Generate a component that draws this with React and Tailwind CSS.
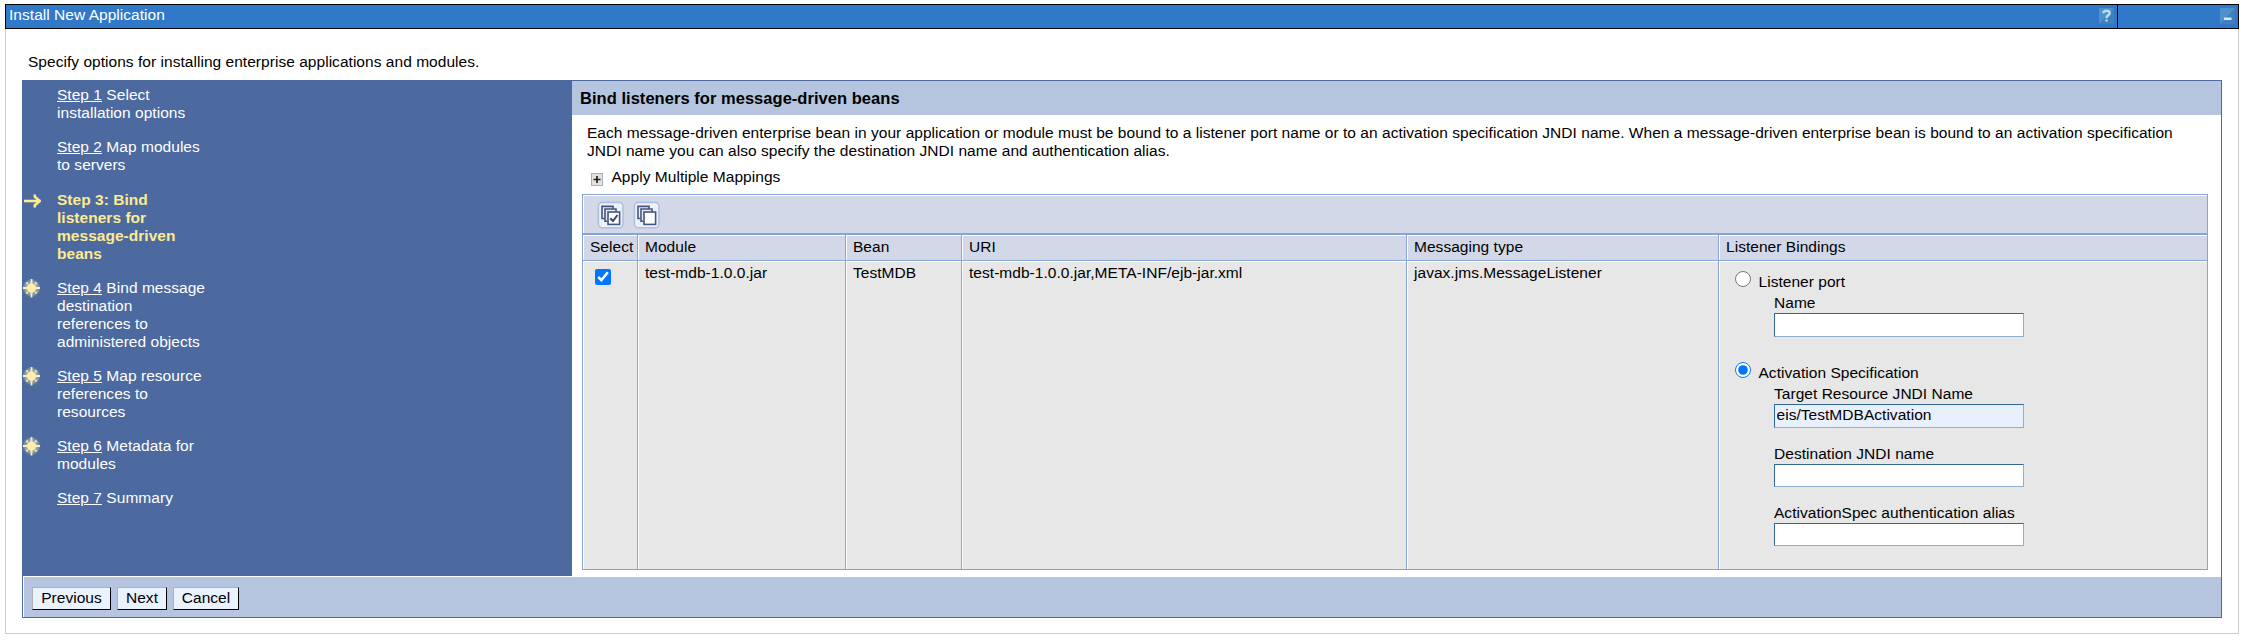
import React from "react";

const steps = [
  { link: "Step 1", lines: [" Select", "installation options"], h: "h-[52px]" },
  { link: "Step 2", lines: [" Map modules", "to servers"], h: "h-[53px]" },
  { current: true, lines: ["Step 3: Bind", "listeners for", "message-driven", "beans"], icon: "arrow", h: "h-[88px]" },
  { link: "Step 4", lines: [" Bind message", "destination", "references to", "administered objects"], icon: "star", h: "h-[88px]" },
  { link: "Step 5", lines: [" Map resource", "references to", "resources"], icon: "star", h: "h-[70px]" },
  { link: "Step 6", lines: [" Metadata for", "modules"], icon: "star", h: "h-[52px]" },
  { link: "Step 7", lines: [" Summary"], h: "h-[52px]" },
];

function Arrow() {
  return (
    <svg width="18" height="18" viewBox="0 0 18 18" className="mt-px" fill="none" stroke="#fdeb92" strokeWidth="2.6">
      <path d="M0 9H16.5" strokeWidth="2.6" />
      <path d="M10.8 2.6V4.8L15.8 9L10.8 13.2V15.4" strokeLinejoin="round" />
    </svg>
  );
}

function Star() {
  return (
    <svg width="18" height="20" viewBox="0 0 18 20" className="-ml-px">
      <defs>
        <radialGradient id="glow">
          <stop offset="0" stopColor="#f6ecb0" stopOpacity="0.75" />
          <stop offset="0.7" stopColor="#e0dcb4" stopOpacity="0.45" />
          <stop offset="1" stopColor="#c0c6b4" stopOpacity="0" />
        </radialGradient>
      </defs>
      <circle cx="8.5" cy="9" r="9.5" fill="url(#glow)" />
      <path d="M8.5 0V18.5M0 9H17" stroke="#fdeeae" strokeWidth="1.8" />
      <path d="M3.4 3.6L13.6 14.4M13.6 3.6L3.4 14.4" stroke="#fdeeae" strokeWidth="2" strokeDasharray="2 2 7 2" />
      <circle cx="8.5" cy="9" r="4.6" fill="#fdeeae" />
    </svg>
  );
}

function Step({ step }) {
  return (
    <li className={`flex ${step.h}`}>
      <span className="w-[34px] shrink-0 pl-px">
        {step.icon === "arrow" && <Arrow />}
        {step.icon === "star" && <Star />}
      </span>
      <span className={step.current ? "font-bold text-[#fdeb92]" : "text-white"}>
        {step.lines.map((line, i) => (
          <span key={line} className="block h-[18px] whitespace-pre">
            {i === 0 && step.link && <a className="underline">{step.link}</a>}
            {line}
          </span>
        ))}
      </span>
    </li>
  );
}

function StackIcon({ checked }) {
  return (
    <svg width="27" height="28" viewBox="0 0 27 28">
      <rect x="1.4" y="1.4" width="24.6" height="25.4" rx="4" fill="#edf0f6" stroke="#acc1df" strokeWidth="1.6" />
      <g fill="#e9edf5" stroke="#435580" strokeWidth="1.6">
        <path d="M7.4 17.5H5V5.4H16V8" />
        <path d="M10 20.3H8V8H19V10.4" />
        <rect x="11" y="11" width="11.6" height="12.4" fill="#fff" />
      </g>
      {checked && <path d="M13.3 17.2L16 20L20.5 14" fill="none" stroke="#33456f" strokeWidth="2" />}
    </svg>
  );
}

function Cell({ head, children }) {
  return (
    <div
      className={`border-r border-[#88a3d6] pt-[3px] pl-[7px] shadow-[inset_1px_1px_0_#fff] ${
        head ? "h-[25px] bg-[#d2d8e8]" : "h-[308px] bg-[#e7e7e7]"
      }`}
    >
      {children}
    </div>
  );
}

function Field({ label, value, className = "" }) {
  return (
    <label className="block pl-[48px]">
      <span className="block h-[18px]">{label}</span>
      <input
        defaultValue={value}
        className={`mt-px block w-[250px] border border-t-[#336699] border-r-[#90afd0] border-b-[#90afd0] border-l-[#336699] px-[1.5px] pb-[2px] outline-none ${className}`}
      />
    </label>
  );
}

function Radio({ label, checked }) {
  return (
    <label className="flex h-[21px]">
      <input type="radio" name="binding" defaultChecked={checked} className="-mt-[2px] mr-[7.5px] ml-[9px] size-4 shrink-0" />
      <span>{label}</span>
    </label>
  );
}

function Button({ children, className }) {
  return (
    <button
      className={`h-[23px] border border-t-[#b1b1b1] border-r-black border-b-black border-l-[#b1b1b1] bg-[#eaf1ff] leading-[18px] ${className}`}
    >
      <span className="block h-[21px] pt-px">{children}</span>
    </button>
  );
}

export default function App() {
  return (
    <div className="h-[642px] w-[2248px] overflow-hidden bg-white pt-1 pl-[5px] font-['Liberation_Sans',Arial,sans-serif] text-[15.5px] leading-[18px] tracking-[0.036px] text-black">
      <div className="h-[630px] w-[2234px] border-r border-b border-l border-[#ccc]">
        <header className="-mx-px flex h-[25px] border border-black bg-[#3079c9] text-white">
          <h1 className="grow pt-px pl-[3px]">Install New Application</h1>
          <div className="flex w-[19px] border-r border-black pt-[3px]">
            <svg width="15" height="16" viewBox="0 0 15 16">
              <rect width="15" height="16" fill="#4f90cf" />
              <path d="M0 16H15V0Z" fill="#3f80bd" />
              <path d="M4.3 5.2C4.3 1.9 10.7 1.9 10.7 5.2C10.7 7.4 7.5 7.3 7.5 10.2M7.5 11.6V13.6" fill="none" stroke="#c3dcf3" strokeWidth="2.4" />
            </svg>
          </div>
          <div className="flex w-[120px] justify-end pt-[3px] pr-[3px]">
            <svg width="15" height="16" viewBox="0 0 15 16">
              <rect width="15" height="16" fill="#4f90cf" />
              <path d="M0 16H15V0Z" fill="#3f80bd" />
              <rect x="4" y="9.5" width="7.5" height="2.5" fill="#d6e8f8" />
            </svg>
          </div>
        </header>

        <p className="h-[51px] pt-[24px] pl-[22px]">Specify options for installing enterprise applications and modules.</p>

        <main className="ml-4 h-[538px] w-[2200px] border border-[#4c69a0]">
          <div className="flex h-[495px]">
            <nav className="w-[549px] shrink-0 bg-[#4c69a0] pt-[5px]">
              <ol>
                {steps.map((s) => (
                  <Step key={s.lines[0]} step={s} />
                ))}
              </ol>
            </nav>
            <section className="grow">
              <h2 className="h-[34px] bg-[#b5c5df] pt-[8px] pl-[8px] text-[16.5px] font-bold">Bind listeners for message-driven beans</h2>
              <p className="pt-[9px] pl-[15px] whitespace-nowrap">
                Each message-driven enterprise bean in your application or module must be bound to a listener port name or to an activation specification JNDI name. When a message-driven enterprise bean is bound to an activation specification
                <br />
                JNDI name you can also specify the destination JNDI name and authentication alias.
              </p>
              <div className="flex h-[34px] pt-2 pl-[19px]">
                <svg width="12" height="13" viewBox="0 0 12 13" className="mt-[5px] mr-[8.5px]">
                  <rect x=".5" y=".5" width="11" height="12" fill="#e2e1da" stroke="#9fb4cc" />
                  <path d="M2.5 6.5H9.5M6 3V10" stroke="#222" strokeWidth="1.7" />
                </svg>
                <span>Apply Multiple Mappings</span>
              </div>

              <div className="ml-[10px] w-[1626px] border-t border-b border-l border-[#88a3d6]">
                <div className="flex h-[40px] gap-[9px] border-r border-b-2 border-[#88a3d6] bg-[#d2d8e8] pt-[6px] pl-[14px] shadow-[inset_1px_1px_0_#fff]">
                  <StackIcon checked />
                  <StackIcon />
                </div>
                <div className="grid grid-cols-[55px_208px_116px_445px_312px_489px] border-b border-[#88a3d6]">
                  <Cell head>Select</Cell>
                  <Cell head>Module</Cell>
                  <Cell head>Bean</Cell>
                  <Cell head>URI</Cell>
                  <Cell head>Messaging type</Cell>
                  <Cell head>Listener Bindings</Cell>
                </div>
                <div className="grid grid-cols-[55px_208px_116px_445px_312px_489px]">
                  <Cell>
                    <input type="checkbox" defaultChecked className="mt-[5px] ml-[5px] block size-4" />
                  </Cell>
                  <Cell>test-mdb-1.0.0.jar</Cell>
                  <Cell>TestMDB</Cell>
                  <Cell>test-mdb-1.0.0.jar,META-INF/ejb-jar.xml</Cell>
                  <Cell>javax.jms.MessageListener</Cell>
                  <Cell>
                    <div className="mt-[9px] h-[91px]">
                      <Radio label="Listener port" />
                      <Field label="Name" className="h-6 bg-white" />
                    </div>
                    <Radio label="Activation Specification" checked />
                    <div className="h-[60px]">
                      <Field label="Target Resource JNDI Name" value="eis/TestMDBActivation" className="h-6 bg-[#e8f0fe]" />
                    </div>
                    <div className="h-[59px]">
                      <Field label="Destination JNDI name" className="h-[23px] bg-white" />
                    </div>
                    <Field label="ActivationSpec authentication alias" className="h-[23px] bg-white" />
                  </Cell>
                </div>
              </div>
            </section>
          </div>
          <footer className="flex h-[41px] gap-[6px] border-t border-l border-white bg-[#b5c5df] pt-[10px] pl-2">
            <Button className="w-[79px]">Previous</Button>
            <Button className="w-[50px]">Next</Button>
            <Button className="w-[66px]">Cancel</Button>
          </footer>
        </main>
      </div>
    </div>
  );
}
